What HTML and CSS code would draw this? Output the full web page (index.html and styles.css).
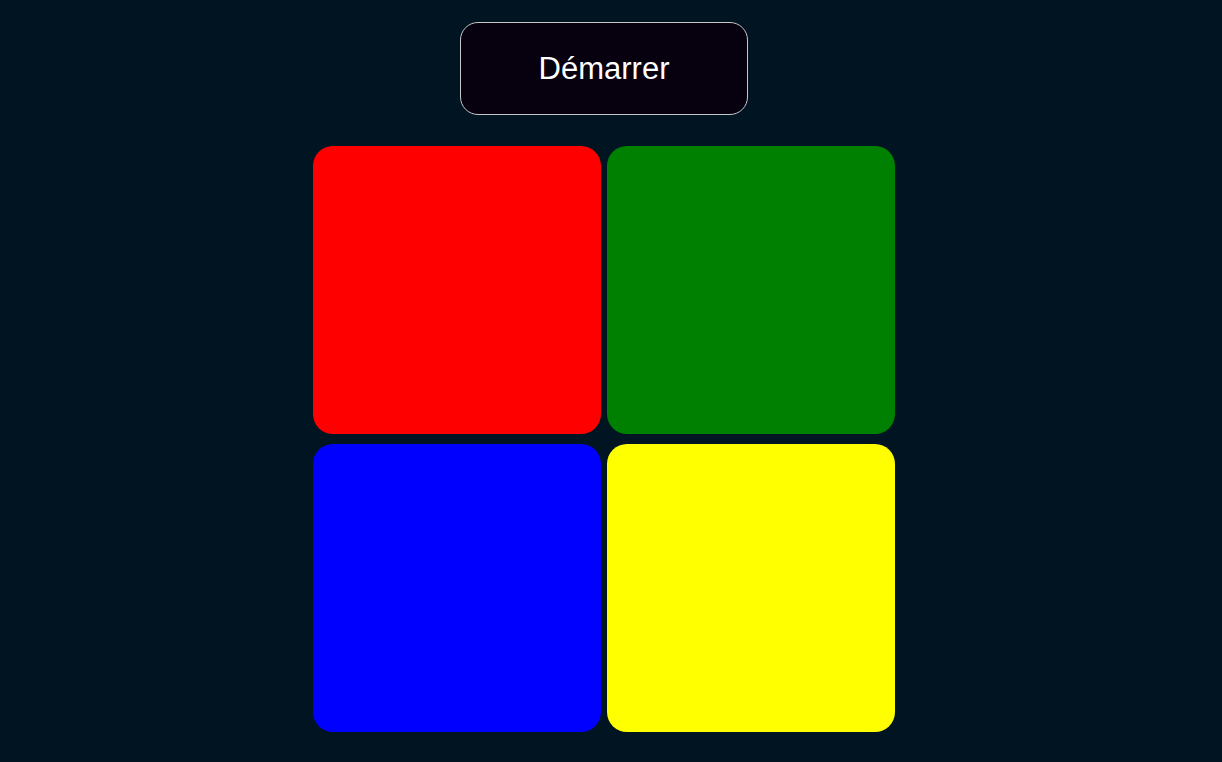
FILE: index.html
```html
<!DOCTYPE html>
<html lang="fr">
<head>
<meta charset="utf-8">
<title>Simon</title>
<link rel="stylesheet" href="styles.css">
</head>
<body>
<main class="page">
  <button class="start">Démarrer</button>
  <div class="board">
    <div class="pad pad-red"></div>
    <div class="pad pad-green"></div>
    <div class="pad pad-blue"></div>
    <div class="pad pad-yellow"></div>
  </div>
</main>
</body>
</html>
```
FILE: styles.css
```css
html, body {
  margin: 0;
  padding: 0;
  background: #011422;
  height: 100%;
}
.page {
  display: flex;
  flex-direction: column;
  align-items: center;
  padding: 22px 14px 0 0;
  font-family: "Liberation Sans", Arial, sans-serif;
}
.start {
  width: 288px;
  height: 93px;
  box-sizing: border-box;
  background: #07000e;
  color: #ffffff;
  border: 1px solid #c8c8c8;
  border-radius: 18px;
  font-family: "Liberation Sans", Arial, sans-serif;
  font-size: 31px;
  padding: 0;
  cursor: pointer;
}
.board {
  margin-top: 31px;
  display: grid;
  grid-template-columns: 288px 288px;
  grid-auto-rows: 288px;
  column-gap: 6px;
  row-gap: 10px;
}
.pad {
  border-radius: 20px;
}
.pad-red { background: #ff0000; }
.pad-green { background: #008000; }
.pad-blue { background: #0000ff; }
.pad-yellow { background: #ffff00; }
```
